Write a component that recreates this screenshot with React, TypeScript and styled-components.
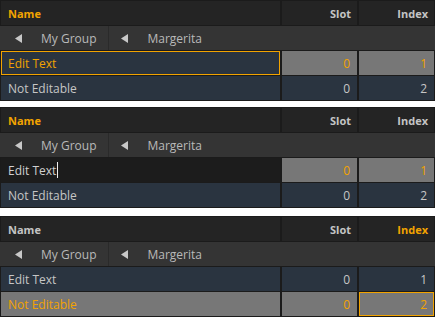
import React from 'react';
import styled, { createGlobalStyle, css } from 'styled-components';

const ORANGE = '#f2a300';

const GlobalStyle = createGlobalStyle`
  body {
    margin: 0;
    background: #ffffff;
    font-family: "Open Sans", "Noto Sans", sans-serif;
  }
`;

const Stack = styled.div`
  display: flex;
  flex-direction: column;
  width: 435px;
`;

const Panel = styled.div<{ spaceBelow?: number }>`
  display: grid;
  grid-template-columns: 1fr 75px 75px;
  grid-auto-rows: 24px;
  column-gap: 2px;
  row-gap: 1px;
  padding: 1px;
  margin-bottom: ${p => p.spaceBelow ?? 0}px;
  background: #1b1b1b;
`;

const HeadCell = styled.div<{ active?: boolean; right?: boolean }>`
  display: flex;
  align-items: center;
  justify-content: ${p => (p.right ? 'flex-end' : 'flex-start')};
  padding: 0 6px 0 7px;
  background: #242424;
  color: ${p => (p.active ? ORANGE : '#c4c4c4')};
  font-size: 11px;
  font-weight: 700;
`;

const GroupRow = styled.div`
  grid-column: 1 / -1;
  display: flex;
  background: #343434;
  margin: 0 -1px;
`;

const Crumb = styled.div<{ divided?: boolean }>`
  display: flex;
  align-items: center;
  gap: 18px;
  padding: 0 12px 0 ${p => (p.divided ? 15 : 12)}px;
  color: #b9b9b9;
  font-size: 12px;
  border-right: ${p => (p.divided ? '1px solid #2a2a2a' : 'none')};
`;

const Arrow = styled.svg`
  width: 8px;
  height: 9px;
  fill: #c8c8c8;
  flex: none;
`;

type CellState = 'normal' | 'selected' | 'editing';

const Cell = styled.div<{ state: CellState; focused?: boolean; right?: boolean }>`
  display: flex;
  align-items: center;
  justify-content: ${p => (p.right ? 'flex-end' : 'flex-start')};
  padding: 0 7px;
  font-size: 12px;
  color: #c6c6c6;
  background: #2a3440;
  ${p => p.state === 'selected' && css`
    background: #777777;
    color: ${ORANGE};
  `}
  ${p => p.state === 'editing' && css`
    background: #1c1c1c;
    color: #d0d0d0;
  `}
  ${p => p.focused && css`
    box-shadow: inset 0 0 0 1px ${ORANGE};
    color: ${ORANGE};
  `}
`;

const Caret = styled.span`
  display: inline-block;
  width: 1px;
  height: 16px;
  margin-left: 1px;
  background: #f0f0f0;
`;

const BackArrow = () => (
  <Arrow viewBox="0 0 8 9">
    <path d="M0 4.5 L7 0 L7 9 Z" />
  </Arrow>
);

type Row = { name: string; slot: number; index: number };

interface TableProps {
  activeHead: 'name' | 'index';
  rows: Row[];
  cellState: (row: number, col: number) => CellState;
  focus?: [number, number];
  editing?: number;
  spaceBelow?: number;
}

const Table = ({ activeHead, rows, cellState, focus, editing, spaceBelow }: TableProps) => (
  <Panel spaceBelow={spaceBelow}>
    <HeadCell active={activeHead === 'name'}>Name</HeadCell>
    <HeadCell right>Slot</HeadCell>
    <HeadCell right active={activeHead === 'index'}>Index</HeadCell>
    <GroupRow>
      <Crumb divided>
        <BackArrow />
        My Group
      </Crumb>
      <Crumb>
        <BackArrow />
        Margerita
      </Crumb>
    </GroupRow>
    {rows.map((r, i) => {
      const values = [r.name, String(r.slot), String(r.index)];
      return values.map((v, c) => {
        const isFocus = focus && focus[0] === i && focus[1] === c;
        return (
          <Cell key={`${i}-${c}`} state={cellState(i, c)} focused={isFocus} right={c > 0}>
            {v}
            {editing === i && c === 0 && <Caret />}
          </Cell>
        );
      });
    })}
  </Panel>
);

const rows: Row[] = [
  { name: 'Edit Text', slot: 0, index: 1 },
  { name: 'Not Editable', slot: 0, index: 2 },
];

export default function App() {
  return (
    <>
      <GlobalStyle />
      <Stack>
        <Table
          activeHead="name"
          rows={rows}
          focus={[0, 0]}
          spaceBelow={6}
          cellState={(r, c) => (r === 0 && c > 0 ? 'selected' : 'normal')}
        />
        <Table
          activeHead="name"
          rows={rows}
          editing={0}
          spaceBelow={8}
          cellState={(r, c) => (r === 0 ? (c === 0 ? 'editing' : 'selected') : 'normal')}
        />
        <Table
          activeHead="index"
          rows={rows}
          focus={[1, 2]}
          cellState={r => (r === 1 ? 'selected' : 'normal')}
        />
      </Stack>
    </>
  );
}
